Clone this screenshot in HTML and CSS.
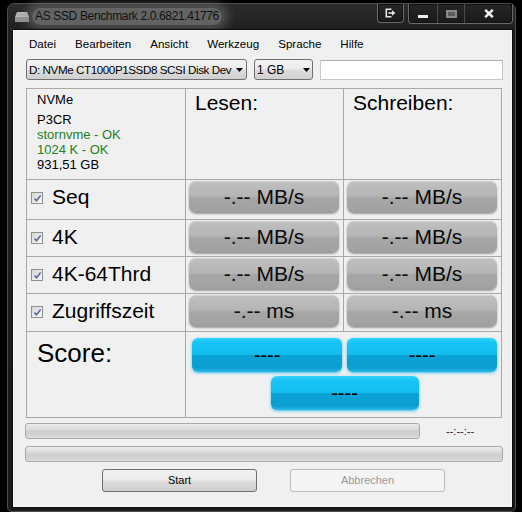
FILE: index.html
```html
<!DOCTYPE html>
<html>
<head>
<meta charset="utf-8">
<title>AS SSD Benchmark</title>
<link rel="stylesheet" href="styles.css">
</head>
<body>
<div class="window">
  <div class="titlebar">
    <svg class="appicon" width="14" height="10" viewBox="0 0 14 10">
      <path d="M2 0h10l2 5H0z" fill="#bcbcbc"/>
      <path d="M0 5h14v5H0z" fill="#909090"/>
      <path d="M3 1.2v3M5 1.2v3M7 1.2v3M9 1.2v3M11 1.2v3" stroke="#9e9e9e" stroke-width="0.8"/>
    </svg>
    <span class="title">AS SSD Benchmark 2.0.6821.41776</span>
    <div class="caption">
      <div class="cbtn extra">
        <svg width="11" height="10" viewBox="0 0 11 10">
          <path d="M6.5 1.3H1.3v7.4h5.2" fill="none" stroke="#e6e6e6" stroke-width="1.6"/>
          <path d="M3.5 5h4" stroke="#e6e6e6" stroke-width="1.6"/>
          <path d="M7 2.2L10.4 5 7 7.8z" fill="#e6e6e6"/>
        </svg>
      </div>
      <div class="cgroup">
        <div class="cbtn min"><span class="minbar"></span></div>
        <div class="cbtn max"><span class="maxbox"></span></div>
        <div class="cbtn close">
          <svg width="10" height="9" viewBox="0 0 10 9">
            <path d="M1.2 0.8L8.8 8.2M8.8 0.8L1.2 8.2" stroke="#f2f2f2" stroke-width="2.4"/>
          </svg>
        </div>
      </div>
    </div>
  </div>

  <div class="client">
    <nav class="menu">
      <span>Datei</span>
      <span>Bearbeiten</span>
      <span>Ansicht</span>
      <span>Werkzeug</span>
      <span>Sprache</span>
      <span>Hilfe</span>
    </nav>

    <div class="toolbar">
      <div class="combo drive">
        <span class="combo-text">D: NVMe CT1000P1SSD8 SCSI Disk Dev</span>
        <svg class="arrow" width="7" height="4" viewBox="0 0 7 4"><path d="M0 0h7L3.5 4z" fill="#000"/></svg>
      </div>
      <div class="combo size">
        <span class="combo-text">1 GB</span>
        <svg class="arrow" width="7" height="4" viewBox="0 0 7 4"><path d="M0 0h7L3.5 4z" fill="#000"/></svg>
      </div>
      <div class="textbox"></div>
    </div>

    <div class="grid">
      <div class="cell info">
        <div class="info-name">NVMe</div>
        <div>P3CR</div>
        <div class="ok">stornvme - OK</div>
        <div class="ok">1024 K - OK</div>
        <div>931,51 GB</div>
      </div>
      <div class="cell head">Lesen:</div>
      <div class="cell head">Schreiben:</div>

      <div class="cell label"><span class="check"><svg width="9" height="9" viewBox="0 0 9 9"><path d="M1.5 4.5l2 2.3L7.6 1.5" fill="none" stroke="#55669a" stroke-width="1.5"/></svg></span><span>Seq</span></div>
      <div class="cell val"><div class="gbox">-.-- MB/s</div></div>
      <div class="cell val"><div class="gbox">-.-- MB/s</div></div>

      <div class="cell label"><span class="check"><svg width="9" height="9" viewBox="0 0 9 9"><path d="M1.5 4.5l2 2.3L7.6 1.5" fill="none" stroke="#55669a" stroke-width="1.5"/></svg></span><span>4K</span></div>
      <div class="cell val"><div class="gbox">-.-- MB/s</div></div>
      <div class="cell val"><div class="gbox">-.-- MB/s</div></div>

      <div class="cell label"><span class="check"><svg width="9" height="9" viewBox="0 0 9 9"><path d="M1.5 4.5l2 2.3L7.6 1.5" fill="none" stroke="#55669a" stroke-width="1.5"/></svg></span><span>4K-64Thrd</span></div>
      <div class="cell val"><div class="gbox">-.-- MB/s</div></div>
      <div class="cell val"><div class="gbox">-.-- MB/s</div></div>

      <div class="cell label"><span class="check"><svg width="9" height="9" viewBox="0 0 9 9"><path d="M1.5 4.5l2 2.3L7.6 1.5" fill="none" stroke="#55669a" stroke-width="1.5"/></svg></span><span>Zugriffszeit</span></div>
      <div class="cell val"><div class="gbox">-.-- ms</div></div>
      <div class="cell val"><div class="gbox">-.-- ms</div></div>

      <div class="cell score">Score:</div>
      <div class="cell scores">
        <div class="bbox">----</div>
        <div class="bbox">----</div>
        <div class="bbox total">----</div>
      </div>
    </div>

    <div class="progress-row">
      <div class="bar short"></div>
      <span class="time">--:--:--</span>
    </div>
    <div class="bar long"></div>

    <div class="buttons">
      <div class="btn">Start</div>
      <div class="btn disabled">Abbrechen</div>
    </div>
  </div>
</div>
</body>
</html>
```

FILE: styles.css
```css
* { box-sizing: border-box; }
html, body { margin: 0; padding: 0; }
body {
  background: #000;
  width: 522px;
  height: 512px;
  overflow: hidden;
  font-family: "Liberation Sans", Arial, sans-serif;
  color: #000;
}

.window {
  margin: 3px 0 0 7px;
  width: 509px;
  height: 509px;
  border: 1px solid #4e4e4e;
  border-radius: 7px 7px 5px 5px;
  background: linear-gradient(#2c2c2c, #1e1e1e 30px, #1b1b1b);
  display: flex;
  flex-direction: column;
}

/* title bar */
.titlebar {
  height: 26px;
  flex: none;
  display: flex;
  align-items: flex-start;
}
.appicon { margin: 8px 0 0 7px; flex: none; }
.title {
  margin: 4px 0 0 3px;
  padding: 0 3px;
  line-height: 17px;
  font-size: 12px;
  letter-spacing: -0.35px;
  color: #111;
  background: rgba(150, 150, 150, 0.55);
  border-radius: 9px;
  box-shadow: 0 0 10px 6px rgba(140, 140, 140, 0.4);
}
.caption {
  margin-left: auto;
  margin-right: 2px;
  display: flex;
  gap: 4px;
}
.cbtn {
  height: 19px;
  display: flex;
  align-items: center;
  justify-content: center;
}
.extra {
  width: 27px;
  border: 1px solid #6a6a6a;
  border-top: none;
  border-radius: 0 0 4px 4px;
  background: linear-gradient(#262626, #1a1a1a);
  box-shadow: inset 0 0 0 1px #111;
}
.cgroup {
  display: flex;
  border: 1px solid #6a6a6a;
  border-top: none;
  border-radius: 0 0 4px 4px;
  background: linear-gradient(#262626, #1a1a1a);
  box-shadow: inset 0 0 0 1px #111;
}
.min { width: 29px; border-right: 1px solid #4c4c4c; align-items: flex-end; padding-bottom: 5px; }
.max { width: 27px; border-right: 1px solid #4c4c4c; }
.close { width: 47px; }
.minbar { width: 10px; height: 3px; background: #eeeeee; }
.maxbox {
  width: 11px; height: 8px;
  background: #5c5c5c;
  border: 2px solid #8a8a8a;
}

/* client */
.client {
  margin: 0 3px 4px 5px;
  flex: 1;
  background: #f0f0f0;
  border: 1px solid #f8f8f8;
  outline: 1px solid #0c0c0c;
  display: flex;
  flex-direction: column;
}

.menu {
  height: 25px;
  padding: 1px 0 0 15px;
  display: flex;
  gap: 19px;
  font-size: 11.6px;
  line-height: 24px;
  color: #000;
}

.toolbar {
  margin: 3px 0 0 12px;
  display: flex;
  height: 21px;
}
.combo {
  height: 21px;
  border: 1px solid #707070;
  border-radius: 3px;
  background: linear-gradient(#f3f3f3, #ebebeb 48%, #dddddd 52%, #d0d0d0);
  display: flex;
  align-items: center;
  font-size: 12px;
  overflow: hidden;
}
.combo-text { padding-left: 2px; white-space: nowrap; overflow: hidden; }
.drive { width: 221px; }
.drive .combo-text { width: 205px; font-size: 11.6px; letter-spacing: -0.4px; }
.size { width: 59px; margin-left: 7px; }
.size .combo-text { width: 44px; padding-left: 2px; }
.arrow { flex: none; margin-left: 4px; }
.textbox {
  margin: 1px 0 0 7px;
  width: 183px;
  height: 20px;
  background: #fff;
  border: 1px solid #c5c8cc;
  border-top-color: #abadb3;
}

/* results grid */
.grid {
  margin: 8px 0 0 12px;
  width: 476px;
  display: grid;
  grid-template-columns: 158px 157px 157px;
  grid-template-rows: 90px 39px 36px 36px 37px 85px;
  gap: 1px;
  background: #a8a8a8;
  border: 1px solid #a8a8a8;
}
.cell { background: #f0f0f0; }

.info {
  padding: 3px 0 0 10px;
  font-size: 13px;
  line-height: 15px;
}
.info-name { margin-bottom: 5px; }
.ok { color: #1f7f1f; }

.head {
  padding: 2px 0 0 9px;
  font-size: 21px;
  line-height: 24px;
}

.label {
  padding: 1px 0 0 4px;
  display: flex;
  align-items: flex-start;
  font-size: 21px;
}
.label span:last-child { line-height: 32px; }
.check {
  flex: none;
  width: 12px;
  height: 12px;
  margin: 11px 9px 0 0;
  border: 1px solid #8e8f8f;
  background: linear-gradient(135deg, #d6d6d6, #f7f7f7);
  display: flex;
  align-items: center;
  justify-content: center;
}

.val { padding: 1px 4px 0 3px; }
.gbox {
  height: 32px;
  border-radius: 7px;
  background: linear-gradient(#c0c0c0, #b5b5b5 46%, #a6a6a6 54%, #a2a2a2 90%, #9b9b9b);
  box-shadow: 0 1px 2px rgba(0, 0, 0, 0.35), inset 0 1px 0 #cfcfcf;
  font-size: 21px;
  line-height: 32px;
  text-align: center;
  color: #0a0a0a;
}

.score {
  padding: 6px 0 0 10px;
  font-size: 26px;
  line-height: 30px;
}
.scores {
  grid-column: 2 / 4;
  padding: 6px 0 0 6px;
  display: grid;
  grid-template-columns: 150px 150px;
  column-gap: 5px;
  row-gap: 4px;
  align-content: start;
}
.bbox {
  height: 34px;
  border-radius: 6px;
  background: linear-gradient(#34d2fb, #18c5f4 12%, #14bdef 48%, #0aa2d5 52%, #0b9ed1 88%, #2ab8e6);
  box-shadow: 0 1px 3px rgba(40, 190, 240, 0.9);
  font-size: 20px;
  line-height: 34px;
  text-align: center;
  color: #000;
}
.bbox.total {
  grid-column: 1 / 3;
  justify-self: center;
  width: 148px;
}

/* progress */
.progress-row {
  margin: 5px 0 0 11px;
  display: flex;
  align-items: center;
  height: 16px;
}
.bar {
  height: 16px;
  border: 1px solid #a9a9a9;
  border-radius: 3px;
  background: linear-gradient(#ececec, #dadada 40%, #cdcdcd 55%, #d4d4d4 85%, #e0e0e0);
}
.short { width: 395px; }
.time { margin-left: 26px; font-size: 11px; color: #222; }
.long { margin: 7px 0 0 11px; width: 478px; }

.buttons {
  margin: 7px 0 0 88px;
  display: flex;
  gap: 33px;
}
.btn {
  width: 155px;
  height: 23px;
  border: 1px solid #707070;
  border-radius: 3px;
  background: linear-gradient(#f2f2f2, #ebebeb 48%, #dddddd 52%, #cfcfcf);
  font-size: 11px;
  line-height: 21px;
  text-align: center;
  color: #000;
}
.btn.disabled {
  border-color: #b8bcbf;
  background: #f4f4f4;
  color: #9a9a9a;
}
```
